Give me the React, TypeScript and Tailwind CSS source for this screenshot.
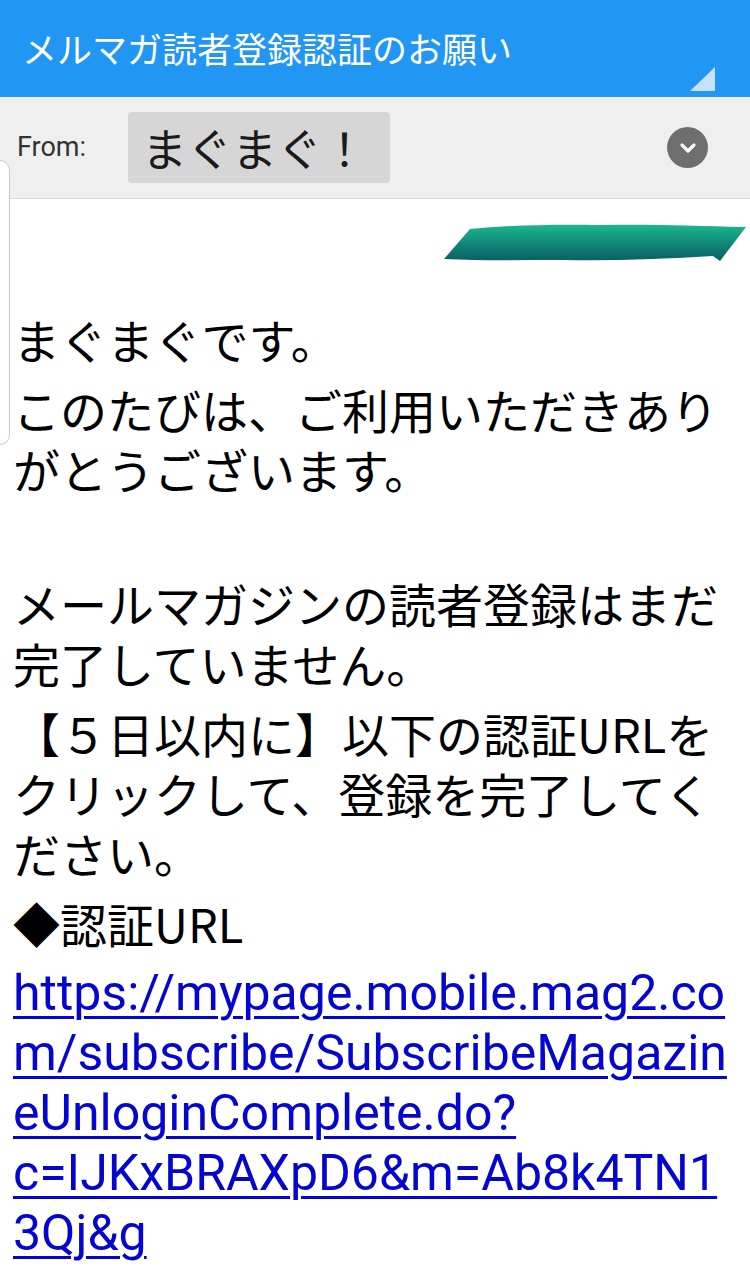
import React from 'react';

const jp = '"Noto Sans CJK JP", "Noto Sans", sans-serif';

function Scribble() {
  return (
    <svg width="304" height="40" viewBox="0 0 304 40">
      <defs>
        <linearGradient id="ink" x1="0" y1="0" x2="0" y2="1">
          <stop offset="0" stopColor="#1cb88c" />
          <stop offset="0.55" stopColor="#0f8577" />
          <stop offset="1" stopColor="#0a5e66" />
        </linearGradient>
      </defs>
      <path
        d="M1 36 L27 6 C70 2 110 1 160 2 C210 1 250 3 303 4 L277 38 L270 33 C220 36 170 38 120 37 C80 37 40 38 1 36 Z"
        fill="url(#ink)"
      />
    </svg>
  );
}

export default function App() {
  const paragraphs: string[][] = [
    ['まぐまぐです。'],
    ['このたびは、ご利用いただきあり', 'がとうございます。'],
  ];
  const paragraphs2: string[][] = [
    ['メールマガジンの読者登録はまだ', '完了していません。'],
    ['【５日以内に】以下の認証URLを', 'クリックして、登録を完了してく', 'ださい。'],
    ['◆認証URL'],
  ];
  const url = [
    'https://mypage.mobile.mag2.co',
    'm/subscribe/SubscribeMagazin',
    'eUnloginComplete.do?',
    'c=IJKxBRAXpD6&m=Ab8k4TN1',
    '3Qj&g',
  ];

  return (
    <div className="relative w-[750px] h-[1280px] overflow-hidden bg-white" style={{ fontFamily: jp }}>
      {/* subject bar */}
      <header className="relative h-[97px] bg-[#2196f3] flex items-center pl-[22px]">
        <h1 className="text-[35px] text-white font-normal">メルマガ読者登録認証のお願い</h1>
        <div className="absolute left-[690px] top-[67px] w-0 h-0 border-l-[25px] border-l-transparent border-b-[24px] border-b-[#c4e2fb]" />
      </header>

      {/* sender row */}
      <div className="h-[102px] bg-[#efefef] border-b border-[#d9d9d9] flex items-center">
        <span className="ml-[17px] w-[111px] text-[27px] text-[#333]" style={{ fontFamily: 'Roboto, "Liberation Sans", sans-serif' }}>
          From:
        </span>
        <div className="w-[262px] h-[71px] rounded-[4px] bg-[#d6d6d6] flex items-center pl-[14px] text-[45px] text-[#1a1a1a]">
          まぐまぐ！
        </div>
        <div className="ml-auto mr-[42px] w-[41px] h-[41px] rounded-full bg-[#6e6e6e] flex items-center justify-center">
          <svg width="18" height="12" viewBox="0 0 18 12">
            <path d="M3 3 L9 9 L15 3" fill="none" stroke="white" strokeWidth="3.2" strokeLinecap="round" strokeLinejoin="round" />
          </svg>
        </div>
      </div>

      {/* left edge handle */}
      <div className="absolute left-[-12px] top-[160px] w-[22px] h-[285px] rounded-[10px] border border-[#c8c8c8] bg-white" />

      {/* body */}
      <div className="pl-[13px] text-[47px] leading-[60px] text-black whitespace-nowrap">
        <div className="flex justify-end pt-[24px] pr-[3px] h-[65px]">
          <Scribble />
        </div>
        <div className="mt-[45px] flex flex-col gap-[10px]">
          {paragraphs.map((p, i) => (
            <p key={i}>
              {p.map((l, j) => (
                <span key={j} className="block">{l}</span>
              ))}
            </p>
          ))}
          <div className="h-[54px]" />
          {paragraphs2.map((p, i) => (
            <p key={i}>
              {p.map((l, j) => (
                <span key={j} className="block">{l}</span>
              ))}
            </p>
          ))}
          <a
            href="#"
            className="block text-[50px] leading-[60px] text-[#0505d2] underline decoration-[3px] underline-offset-[6px]"
            style={{ fontFamily: 'Roboto, "Liberation Sans", sans-serif' }}
          >
            {url.map((l, j) => (
              <span key={j} className="block w-fit">{l}</span>
            ))}
          </a>
        </div>
      </div>
    </div>
  );
}
